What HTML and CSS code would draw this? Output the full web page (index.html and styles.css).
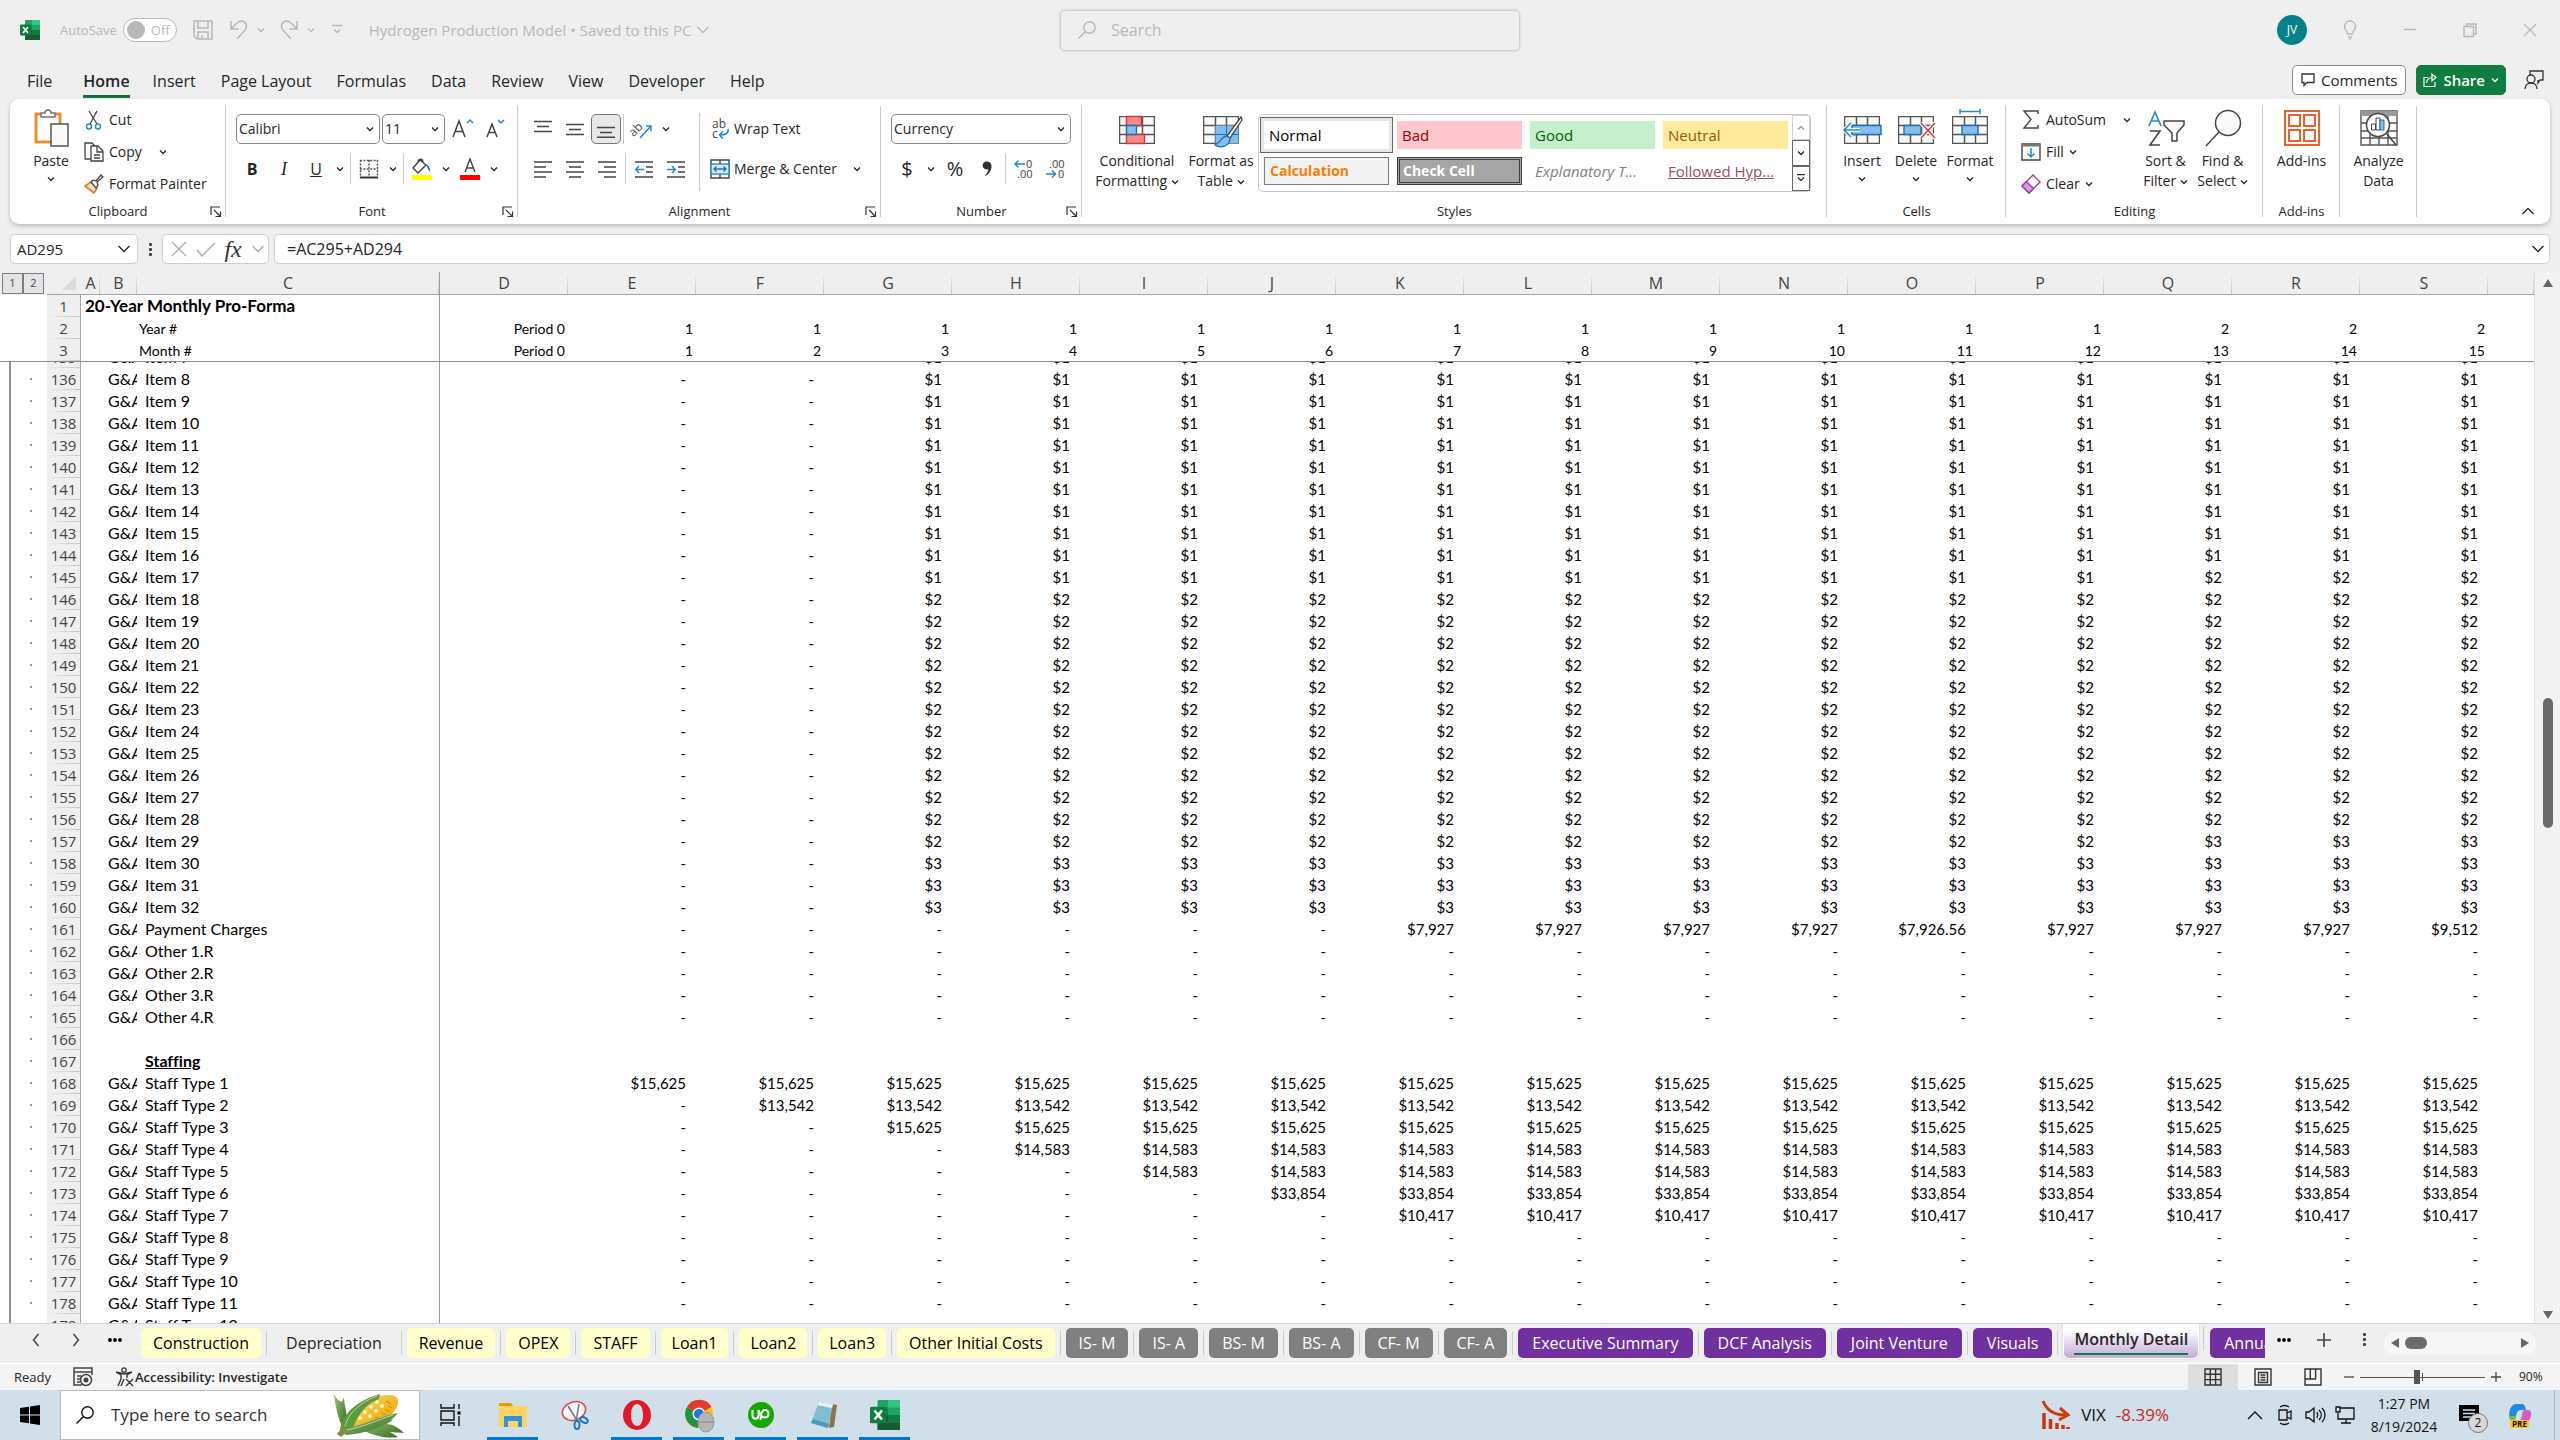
FILE: index.html
```
<!DOCTYPE html>
<html lang="en">
<head>
<meta charset="utf-8">
<title>Hydrogen Production Model - Excel</title>
<link rel="stylesheet" href="styles.css">
</head>
<body>
<svg class="defs" aria-hidden="true">
  <symbol id="chev" viewBox="0 0 8 8"><path d="M1 2.5l3 3 3-3" fill="none" stroke="currentColor" stroke-width="1.3"/></symbol>
  <symbol id="chev-lg" viewBox="0 0 14 14"><path d="M1.5 4l5.500 5.500L12.500 4" fill="none" stroke="currentColor" stroke-width="1.3"/></symbol>
  <symbol id="launch" viewBox="0 0 12 12"><path d="M1 9V1h9M4 4l6 6M10.500 5.500v5h-5" fill="none" stroke="#333" stroke-width="1.2"/></symbol>
  <symbol id="excel" viewBox="0 0 20 20">
    <rect x="5" y="0" width="15" height="20" rx="1" fill="#21a366"/><rect x="12" y="0" width="8" height="5" fill="#33c481"/><rect x="5" y="5" width="7" height="5" fill="#17864c"/><rect x="12" y="10" width="8" height="5" fill="#107c41"/><rect x="5" y="10" width="7" height="5" fill="#185c37"/><rect x="5" y="15" width="15" height="5" fill="#185c37"/><rect x="0" y="4.500" width="11" height="11" rx="1" fill="#107c41"/><path d="M3 7l5 6M8 7l-5 6" stroke="#fff" stroke-width="1.700"/>
  </symbol>
  <symbol id="mag" viewBox="0 0 20 20"><circle cx="12.500" cy="7.500" r="5.700" fill="none" stroke="currentColor" stroke-width="1.400"/><path d="M8.500 11.500L1.500 18.500" stroke="currentColor" stroke-width="1.400"/></symbol>
  <symbol id="grid-cells" viewBox="0 0 36 28"><path d="M.5.5h35v27H.5zM12.500.5v27M23.500.5v27M.5 9.500h35M.5 18.500h35" fill="#fafafa" stroke="#555" stroke-width="1.500"/></symbol>
</svg>

<header class="titlebar">
  <div class="title-left">
    <svg class="i20"><use href="#excel"/></svg>
    <label class="autosave"><span>AutoSave</span><input type="checkbox" class="toggle-input"><span class="toggle"><i></i>Off</span></label>
    <div class="quick">
      <button class="ib" aria-label="Save"><svg class="i20" viewBox="0 0 20 20"><path d="M1 1h18v18H4l-3-3zM5 1v7h10V1M5 19v-7h10v7M9 19v-4" fill="none" stroke="currentColor" stroke-width="1.500"/></svg></button>
      <button class="ib pair" aria-label="Undo"><svg class="i20" viewBox="0 0 20 20"><path d="M2 1v8h8M2 9l6-6c6-5 12 1 8 7l-8 9" fill="none" stroke="currentColor" stroke-width="1.500"/></svg><svg class="i8"><use href="#chev"/></svg></button>
      <button class="ib pair" aria-label="Redo"><svg class="i20" viewBox="0 0 20 20"><path d="M18 1v8h-8M18 9l-6-6C6-2 0 4 4 10l8 9" fill="none" stroke="currentColor" stroke-width="1.500"/></svg><svg class="i8"><use href="#chev"/></svg></button>
      <button class="ib" aria-label="Customize Quick Access Toolbar"><svg class="i12" viewBox="0 0 12 12"><path d="M1 1.500h10M3 5.500l3 3 3-3" fill="none" stroke="currentColor" stroke-width="1.300"/></svg></button>
    </div>
    <button class="doc">Hydrogen Production Model • Saved to this PC <svg class="i14"><use href="#chev-lg"/></svg></button>
  </div>
  <label class="search"><svg class="i20"><use href="#mag"/></svg><input type="text" placeholder="Search" aria-label="Search"></label>
  <div class="title-right">
    <button class="avatar">JV</button>
    <button class="wb" aria-label="Tips"><svg class="i20" viewBox="0 0 20 20"><path d="M7.500 14c0-3-3-4-3-7.500a5.500 5.500 0 0 1 11 0c0 3.500-3 4.500-3 7.500zM8 17h4M9 19h2" fill="none" stroke="currentColor" stroke-width="1.300"/></svg></button>
    <button class="wb" aria-label="Minimize"><svg class="i14" viewBox="0 0 14 14"><path d="M1 6.500h12" stroke="currentColor" stroke-width="1.500"/></svg></button>
    <button class="wb" aria-label="Restore"><svg class="i14" viewBox="0 0 14 14"><path d="M1 3.500h9.500v10H1zM3.500 3V1h9.500v10h-2" fill="none" stroke="currentColor" stroke-width="1.400"/></svg></button>
    <button class="wb" aria-label="Close"><svg class="i14" viewBox="0 0 14 14"><path d="M1 1l12 12M13 1L1 13" stroke="currentColor" stroke-width="1.300"/></svg></button>
  </div>
</header>

<nav class="menu">
  <button class="first">File</button><button class="on">Home</button><button>Insert</button><button>Page Layout</button><button>Formulas</button><button>Data</button><button>Review</button><button>View</button><button>Developer</button><button>Help</button>
  <div class="menu-right">
    <button class="comments"><svg class="i14" viewBox="0 0 14 14"><path d="M1 1h12v8.500H6L3 12.500v-3H1z" fill="none" stroke="#333" stroke-width="1.300"/></svg>Comments</button>
    <button class="share"><svg class="i14" viewBox="0 0 14 14"><path d="M5 4.500H1v9h11V9M3.500 10c.5-4 3-5.500 6-5.500M9 1v7l4-3.500z" fill="none" stroke="#fff" stroke-width="1.200"/></svg>Share<svg class="i8"><use href="#chev"/></svg></button>
    <button class="ib" aria-label="Presence"><svg class="i20" viewBox="0 0 20 20"><path d="M6 5V1h13v9h-3l-2 3v-3" fill="none" stroke="#333" stroke-width="1.300"/><circle cx="7" cy="9" r="4" fill="none" stroke="#333" stroke-width="1.300"/><path d="M1 19c0-8 12-8 12 0" fill="none" stroke="#333" stroke-width="1.300"/></svg></button>
  </div>
</nav>

<section class="ribbon">
  <div class="group g-clip">
    <div class="gbody">
      <button class="big"><svg class="i38" viewBox="0 0 38 38"><path d="M4 5h24v28H4z" fill="#fff" stroke="#e8912d" stroke-width="3"/><path d="M9 8V4h4c0-4 6-4 6 0h4v4z" fill="#fff" stroke="#777" stroke-width="1.500"/><path d="M19 15h17v22H19z" fill="#fafafa" stroke="#555" stroke-width="1.500"/></svg><span>Paste</span><svg class="i8"><use href="#chev"/></svg></button>
      <div class="rows3">
        <button class="sm"><svg class="i20" viewBox="0 0 20 20"><path d="M5 1l8 13M13 1L6 14" stroke="#444" stroke-width="1.300"/><circle cx="5" cy="16.500" r="2.500" fill="none" stroke="#1e8bcd" stroke-width="1.400"/><circle cx="14" cy="16.500" r="2.500" fill="none" stroke="#1e8bcd" stroke-width="1.400"/></svg>Cut</button>
        <button class="sm"><svg class="i20" viewBox="0 0 20 20"><path d="M7 17H1V1h7l3 3M7 4h7l5 5v10H7zM13 4v6h6M10 13h6M10 16h6" fill="none" stroke="#444" stroke-width="1.300"/></svg>Copy<svg class="i8 far"><use href="#chev"/></svg></button>
        <button class="sm"><svg class="i20" viewBox="0 0 20 20"><path d="M1 12l6-4 6 6-3 5z" fill="#fbe3c9" stroke="#e07b1a" stroke-width="1.600"/><path d="M7 8l2-2 3 1 5-6 2 2-6 5 1 3-2 3z" fill="#fff" stroke="#444" stroke-width="1.300"/></svg>Format Painter</button>
      </div>
    </div>
    <div class="glabel"><span>Clipboard</span><button class="launch" aria-label="Clipboard settings"><svg class="i12"><use href="#launch"/></svg></button></div>
  </div>

  <div class="group g-font">
    <div class="gbody rows2">
      <div class="row">
        <span class="sel w-font"><select aria-label="Font"><option>Calibri</option></select><svg class="i8"><use href="#chev"/></svg></span>
        <span class="sel w-size"><select aria-label="Font size"><option>11</option></select><svg class="i8"><use href="#chev"/></svg></span>
        <button class="ic" aria-label="Increase font size"><svg class="i24" viewBox="0 0 24 24"><path d="M2 20L8 4l6 16M4 14.500h8" fill="none" stroke="#444" stroke-width="1.500"/><path d="M16 6l3-3 3 3" fill="none" stroke="#1e8bcd" stroke-width="1.500"/></svg></button>
        <button class="ic" aria-label="Decrease font size"><svg class="i24" viewBox="0 0 24 24"><path d="M4 20L9 7l5 13M6 15.500h6" fill="none" stroke="#444" stroke-width="1.500"/><path d="M15 3l3 3 3-3" fill="none" stroke="#1e8bcd" stroke-width="1.500"/></svg></button>
      </div>
      <div class="row">
        <button class="ic glyph"><b>B</b></button><button class="ic glyph"><i class="serif">I</i></button><button class="ic glyph"><u>U</u></button><button class="dd" aria-label="Underline options"><svg class="i8"><use href="#chev"/></svg></button>
        <hr>
        <button class="ic" aria-label="Borders"><svg class="i20" viewBox="0 0 20 20"><path d="M1.500 1v18M10 1v18M18.500 1v18M1 1.500h18M1 10h18" stroke="#555" stroke-width="1.500" stroke-dasharray="2 1.400"/><path d="M1 18.500h18" stroke="#333" stroke-width="2"/></svg></button><button class="dd" aria-label="Border options"><svg class="i8"><use href="#chev"/></svg></button>
        <hr>
        <button class="ic" aria-label="Fill color"><svg class="i22" viewBox="0 0 22 22"><path d="M9 2l-7 8 5 5 8-8zM7 5c0-5 5-5 5 0" fill="none" stroke="#444" stroke-width="1.400"/><path d="M15 6c4 2 4 5 4 8l-2-3z" fill="#1e6fb5"/><rect x="1" y="17" width="20" height="5" fill="#ff0"/></svg></button><button class="dd" aria-label="Fill options"><svg class="i8"><use href="#chev"/></svg></button>
        <button class="ic" aria-label="Font color"><svg class="i22" viewBox="0 0 22 22"><path d="M6 14L11 1l5 13M8 10h6" fill="none" stroke="#444" stroke-width="1.400"/><rect x="1" y="17" width="20" height="5" fill="#f00"/></svg></button><button class="dd" aria-label="Font color options"><svg class="i8"><use href="#chev"/></svg></button>
      </div>
    </div>
    <div class="glabel"><span>Font</span><button class="launch" aria-label="Font settings"><svg class="i12"><use href="#launch"/></svg></button></div>
  </div>

  <div class="group g-align">
    <div class="gbody">
      <div class="rows2 al-left">
        <div class="row">
          <button class="ic" aria-label="Top align"><svg class="i18" viewBox="0 0 18 18"><path d="M0 1.500h18M3 6.500h12M0 11.500h18" stroke="#444" stroke-width="1.400"/></svg></button>
          <button class="ic" aria-label="Middle align"><svg class="i18" viewBox="0 0 18 18"><path d="M0 4.500h18M3 9.500h12M0 14.500h18" stroke="#444" stroke-width="1.400"/></svg></button>
          <button class="ic pressed" aria-label="Bottom align"><svg class="i18" viewBox="0 0 18 18"><path d="M0 7.500h18M3 12.500h12M0 17.300h18" stroke="#444" stroke-width="1.400"/></svg></button>
          <hr>
          <button class="ic" aria-label="Orientation"><svg class="i22" viewBox="0 0 22 22"><text x="-3" y="14" font-size="12" fill="#444" transform="rotate(-45 6 10)">ab</text><path d="M9 20L20 8M15 8h5v5" fill="none" stroke="#1e8bcd" stroke-width="1.500"/></svg></button><button class="dd" aria-label="Orientation options"><svg class="i8"><use href="#chev"/></svg></button>
        </div>
        <div class="row">
          <button class="ic" aria-label="Align left"><svg class="i18" viewBox="0 0 18 18"><path d="M0 2h18M0 7h12M0 12h18M0 17h12" stroke="#444" stroke-width="1.400"/></svg></button>
          <button class="ic" aria-label="Center"><svg class="i18" viewBox="0 0 18 18"><path d="M0 2h18M3 7h12M0 12h18M3 17h12" stroke="#444" stroke-width="1.400"/></svg></button>
          <button class="ic" aria-label="Align right"><svg class="i18" viewBox="0 0 18 18"><path d="M0 2h18M6 7h12M0 12h18M6 17h12" stroke="#444" stroke-width="1.400"/></svg></button>
          <hr>
          <button class="ic" aria-label="Decrease indent"><svg class="i18" viewBox="0 0 18 18"><path d="M0 2h18M11 7h7M11 12h7M0 17h18" stroke="#444" stroke-width="1.400"/><path d="M9 9.500H1M4 6L.8 9.500 4 13" fill="none" stroke="#1e8bcd" stroke-width="1.500"/></svg></button>
          <button class="ic" aria-label="Increase indent"><svg class="i18" viewBox="0 0 18 18"><path d="M0 2h18M11 7h7M11 12h7M0 17h18" stroke="#444" stroke-width="1.400"/><path d="M0 9.500h8M5 6l3.200 3.500L5 13" fill="none" stroke="#1e8bcd" stroke-width="1.500"/></svg></button>
        </div>
      </div>
      <hr class="tall">
      <div class="rows2 al-right">
        <button class="row sm"><svg class="i20" viewBox="0 0 20 20"><text x="2" y="9" font-size="12" fill="#444">ab</text><text x="2" y="19" font-size="12" fill="#444">c</text><path d="M18 10c1 4-2 6-8 6M13 12.500L9.500 16l3.500 3.500" fill="none" stroke="#1e8bcd" stroke-width="1.600"/></svg>Wrap Text</button>
        <button class="row sm"><svg class="i20" viewBox="0 0 20 20"><path d="M1 1h18v18H1zM10 1v4M10 15v4" fill="none" stroke="#444" stroke-width="1.400"/><rect x="1" y="5" width="18" height="10" fill="#d6ebfa" stroke="#1e8bcd" stroke-width="1.400"/><path d="M4 10h12M6.500 7.500L4 10l2.500 2.500M13.500 7.500L16 10l-2.500 2.500" fill="none" stroke="#1e6fb5" stroke-width="1.400"/></svg>Merge &amp; Center<svg class="i8 far"><use href="#chev"/></svg></button>
      </div>
    </div>
    <div class="glabel"><span>Alignment</span><button class="launch" aria-label="Alignment settings"><svg class="i12"><use href="#launch"/></svg></button></div>
  </div>

  <div class="group g-num">
    <div class="gbody rows2">
      <div class="row"><span class="sel w-num"><select aria-label="Number format"><option>Currency</option></select><svg class="i8"><use href="#chev"/></svg></span></div>
      <div class="row shift">
        <button class="ic glyph lg">$</button><button class="dd" aria-label="Currency options"><svg class="i8"><use href="#chev"/></svg></button><button class="ic glyph lg">%</button><button class="ic" aria-label="Comma style"><svg class="i18" viewBox="0 0 18 18"><path d="M9 1.500a4 4 0 1 0 1.500 7.500c-.5 3-2 5-4 7 4-1 7-5 7-10 0-3-2-4.500-4.500-4.500z" fill="#333"/></svg></button>
        <hr>
        <button class="ic" aria-label="Increase decimal"><svg class="i20" viewBox="0 0 20 20"><text x="12" y="9" font-size="11" fill="#444">0</text><text x="3" y="19" font-size="11" fill="#444">.00</text><path d="M11 5H1M4.500 1.500L1 5l3.500 3.500" fill="none" stroke="#1e8bcd" stroke-width="1.500"/></svg></button>
        <button class="ic" aria-label="Decrease decimal"><svg class="i20" viewBox="0 0 20 20"><text x="3" y="9" font-size="11" fill="#444">.00</text><text x="12" y="19" font-size="11" fill="#444">0</text><path d="M0 15h9M6 11.500L9.500 15 6 18.500" fill="none" stroke="#1e8bcd" stroke-width="1.500"/></svg></button>
      </div>
    </div>
    <div class="glabel"><span>Number</span><button class="launch" aria-label="Number settings"><svg class="i12"><use href="#launch"/></svg></button></div>
  </div>

  <div class="group g-styles">
    <div class="gbody">
      <button class="big wide"><svg class="i38" viewBox="0 0 38 38"><g transform="translate(1 7)"><use href="#grid-cells" width="36" height="28"/><path d="M7.500.5h15v9h-15zM7.500 18.500h18v9h-18z" fill="#ff8a8a" stroke="#d13438" stroke-width="1.400"/><path d="M7.500 9.500h10v9h-10z" fill="#83beec" stroke="#1e6fb5" stroke-width="1.400"/></g></svg><span>Conditional<br>Formatting <svg class="i8"><use href="#chev"/></svg></span></button>
      <button class="big mid"><svg class="i38" viewBox="0 0 38 38"><g transform="translate(1 7)"><use href="#grid-cells" width="36" height="28"/><path d="M12.500 9.500h23v18h-23z" fill="#83beec"/><path d="M12.500 18.500h23M23.500 9.500v18" stroke="#1e6fb5"/><path d="M38 1L24 20l3 2L39 4z" fill="#fff" stroke="#444" stroke-width="1.300"/><path d="M24 20c-6 0-5 6-12 9 6 4 15 1 15-7z" fill="#83beec" stroke="#1e6fb5" stroke-width="1.300"/></g></svg><span>Format as<br>Table <svg class="i8"><use href="#chev"/></svg></span></button>
      <div class="gallery">
        <div class="swatches">
          <button class="sw normal">Normal</button><button class="sw bad">Bad</button><button class="sw good">Good</button><button class="sw neutral">Neutral</button>
          <button class="sw calc">Calculation</button><button class="sw check">Check Cell</button><button class="sw expl">Explanatory T...</button><button class="sw link">Followed Hyp...</button>
        </div>
        <div class="gscroll">
          <button class="dim" aria-label="Previous styles"><svg class="i8 flip"><use href="#chev"/></svg></button>
          <button aria-label="Next styles"><svg class="i8"><use href="#chev"/></svg></button>
          <button aria-label="More styles"><svg class="i8" viewBox="0 0 8 8"><path d="M0 .7h8M1 3.500l3 3 3-3" fill="none" stroke="#333" stroke-width="1.300"/></svg></button>
        </div>
      </div>
    </div>
    <div class="glabel"><span>Styles</span></div>
  </div>

  <div class="group g-cells">
    <div class="gbody">
      <button class="big"><svg class="i38" viewBox="0 0 38 38"><g transform="translate(1 7)"><use href="#grid-cells" width="36" height="28"/><path d="M8 9.500h29v9H8z" fill="#83beec" stroke="#1e6fb5" stroke-width="1.400"/><path d="M0 14h16M7 7l-7 7 7 7" fill="none" stroke="#fff" stroke-width="4"/><path d="M0 14h16M7 7l-7 7 7 7" fill="none" stroke="#1e8bcd" stroke-width="1.600"/></g></svg><span>Insert</span><svg class="i8"><use href="#chev"/></svg></button>
      <button class="big"><svg class="i38" viewBox="0 0 38 38"><g transform="translate(1 7)"><use href="#grid-cells" width="36" height="28"/><path d="M6 9.500h17v9H6z" fill="#83beec" stroke="#1e6fb5" stroke-width="1.400"/><path d="M23 7l14 15M37 7L23 22" stroke="#fff" stroke-width="4"/><path d="M23 7l14 15M37 7L23 22" stroke="#e03a3e" stroke-width="1.600"/></g></svg><span>Delete</span><svg class="i8"><use href="#chev"/></svg></button>
      <button class="big"><svg class="i38" viewBox="0 0 38 38"><path d="M9 2.500h20M9 0v5M29 0v5" stroke="#1e8bcd" stroke-width="1.500"/><g transform="translate(1 7)"><use href="#grid-cells" width="36" height="28"/><path d="M10 9.500h16v9H10z" fill="#83beec" stroke="#1e6fb5" stroke-width="1.400"/></g></svg><span>Format</span><svg class="i8"><use href="#chev"/></svg></button>
    </div>
    <div class="glabel"><span>Cells</span></div>
  </div>

  <div class="group g-edit">
    <div class="gbody">
      <div class="rows3">
        <button class="sm"><svg class="i20" viewBox="0 0 20 20"><path d="M17 4V1H3l7 8.500L3 18h14v-3" fill="none" stroke="#444" stroke-width="1.400"/></svg>AutoSum<svg class="i8 far"><use href="#chev"/></svg></button>
        <button class="sm"><svg class="i20" viewBox="0 0 20 20"><path d="M1 2h18v16H1z" fill="#fff" stroke="#444" stroke-width="1.400"/><path d="M1 3h18" stroke="#777" stroke-width="3"/><path d="M10 6v9M6.500 11.500L10 15l3.500-3.500" fill="none" stroke="#1e8bcd" stroke-width="1.500"/></svg>Fill<svg class="i8"><use href="#chev"/></svg></button>
        <button class="sm"><svg class="i20" viewBox="0 0 20 20"><path d="M1 12L12 1l7 7L8 19z" fill="#fff" stroke="#9b3fa5" stroke-width="1.400"/><path d="M1 12l4.500-4.500 7 7L8 19z" fill="#d79ade" stroke="#9b3fa5" stroke-width="1.400"/></svg>Clear<svg class="i8"><use href="#chev"/></svg></button>
      </div>
      <button class="big"><svg class="i38" viewBox="0 0 38 38"><path d="M2 17L8 3l6 14M4 12h8" fill="none" stroke="#1e8bcd" stroke-width="1.600"/><path d="M3 22h10L3 36h10" fill="none" stroke="#444" stroke-width="1.600"/><path d="M17 12h20v4l-7 8v8h-5v-8l-8-8z" fill="#fafafa" stroke="#444" stroke-width="1.500"/></svg><span>Sort &amp;<br>Filter <svg class="i8"><use href="#chev"/></svg></span></button>
      <button class="big"><svg class="i38" viewBox="0 0 38 38"><circle cx="24" cy="14" r="12.500" fill="#fafafa" stroke="#444" stroke-width="1.500"/><path d="M15 23L2 37" stroke="#444" stroke-width="1.500"/></svg><span>Find &amp;<br>Select <svg class="i8"><use href="#chev"/></svg></span></button>
    </div>
    <div class="glabel"><span>Editing</span></div>
  </div>

  <div class="group g-add">
    <div class="gbody"><button class="big"><svg class="i38" viewBox="0 0 38 38"><path d="M2 2h34v34H2zM6 6h11v11H6zM21 6h11v11H21zM6 21h11v11H6zM21 21h11v11H21z" fill="#fff" stroke="#e8622c" stroke-width="2"/></svg><span>Add-ins</span></button></div>
    <div class="glabel"><span>Add-ins</span></div>
  </div>
  <div class="group g-add">
    <div class="gbody"><button class="big"><svg class="i38" viewBox="0 0 38 38"><path d="M1 2h36v34H1zM1 14h36M1 22h36M1 29h36M10 6v30M28 6v30M19 6v30" fill="#fafafa" stroke="#555" stroke-width="1.400"/><path d="M1 4.500h36" stroke="#999" stroke-width="5"/><circle cx="18" cy="16" r="11.500" fill="#fff" stroke="#444" stroke-width="1.500"/><path d="M27 25l9 11" stroke="#444" stroke-width="1.500"/><path d="M11.500 15h4v6h-4zM16 9h4v12h-4z" fill="#fff" stroke="#444"/><path d="M20 11h4v10h-4z" fill="#83beec" stroke="#1e6fb5"/></svg><span>Analyze<br>Data</span></button></div>
    <div class="glabel"></div>
  </div>
  <button class="ib collapse" aria-label="Collapse ribbon"><svg class="i14 flip"><use href="#chev-lg"/></svg></button>
</section>

<section class="formula">
  <label class="fbox namebox"><input type="text" value="AD295" aria-label="Name box"><svg class="i14"><use href="#chev-lg"/></svg></label>
  <span class="grip" aria-hidden="true"><i></i><i></i><i></i></span>
  <div class="fbox fx">
    <button class="ib" aria-label="Cancel"><svg class="i18" viewBox="0 0 18 18"><path d="M2 2l14 14M16 2L2 16" stroke="#aaa" stroke-width="1.300"/></svg></button>
    <button class="ib" aria-label="Enter"><svg class="i18" viewBox="0 0 18 18"><path d="M0 10l5 6L18 3" fill="none" stroke="#aaa" stroke-width="1.300"/></svg></button>
    <button class="ib fn">fx</button>
    <button class="ib" aria-label="Function list"><svg class="i14 grey"><use href="#chev-lg"/></svg></button>
  </div>
  <label class="fbox finput"><input type="text" value="=AC295+AD294" aria-label="Formula bar"><svg class="i14"><use href="#chev-lg"/></svg></label>
</section>

<main class="sheet">
  <div class="panes">
    <table class="grid frozen" id="frozen"></table>
    <div class="scroll" id="scroll"><table class="grid" id="body"></table></div>
  </div>
  <div class="vbar" aria-hidden="true"><svg class="i12" viewBox="0 0 12 12"><path d="M6 2l5 8H1z" fill="#666"/></svg><i class="above"></i><i class="thumb"></i><i class="below"></i><svg class="i12 flip" viewBox="0 0 12 12"><path d="M6 2l5 8H1z" fill="#666"/></svg></div>
</main>

<footer class="tabs">
  <div class="tabnav">
    <button class="ib" aria-label="Previous sheet"><svg class="i14" viewBox="0 0 14 14"><path d="M9.500 1l-5 6 5 6" fill="none" stroke="#444" stroke-width="1.500"/></svg></button>
    <button class="ib" aria-label="Next sheet"><svg class="i14" viewBox="0 0 14 14"><path d="M4.500 1l5 6-5 6" fill="none" stroke="#444" stroke-width="1.500"/></svg></button>
    <button class="ib" aria-label="More sheets"><svg class="i14" viewBox="0 0 14 14"><circle cx="2" cy="7" r="1.900"/><circle cx="7" cy="7" r="1.900"/><circle cx="12" cy="7" r="1.900"/></svg></button>
  </div>
  <div class="tablist">
    <button class="tab y">Construction</button><button class="tab plain">Depreciation</button><button class="tab y">Revenue</button><button class="tab y">OPEX</button><button class="tab y">STAFF</button><button class="tab y loan">Loan1</button><button class="tab y loan">Loan2</button><button class="tab y loan">Loan3</button><button class="tab y">Other Initial Costs</button><button class="tab g">IS- M</button><button class="tab g">IS- A</button><button class="tab g">BS- M</button><button class="tab g">BS- A</button><button class="tab g">CF- M</button><button class="tab g">CF- A</button><button class="tab p">Executive Summary</button><button class="tab p">DCF Analysis</button><button class="tab p">Joint Venture</button><button class="tab p">Visuals</button><button class="tab active"><span>Monthly Detail</span></button><button class="tab p">Annual Detail</button>
  </div>
  <div class="tabend">
    <button class="ib" aria-label="More sheets"><svg class="i14" viewBox="0 0 14 14"><circle cx="2" cy="7" r="1.900"/><circle cx="7" cy="7" r="1.900"/><circle cx="12" cy="7" r="1.900"/></svg></button>
    <button class="ib" aria-label="New sheet"><svg class="i14" viewBox="0 0 14 14"><path d="M7 0v14M0 7h14" stroke="#444" stroke-width="1.700"/></svg></button>
    <span class="grip" aria-hidden="true"><i></i><i></i><i></i></span>
  </div>
  <div class="hbar" aria-hidden="true"><svg class="i12" viewBox="0 0 12 12"><path d="M2 6l8-5v10z" fill="#666"/></svg><i></i><svg class="i12 last" viewBox="0 0 12 12"><path d="M10 6L2 1v10z" fill="#666"/></svg></div>
</footer>

<div class="status">
  <span>Ready</span>
  <svg class="i20" viewBox="0 0 20 20"><path d="M19 8V1H1v17h8M1 5h18M4 9h4M4 12h3M4 15h3" fill="none" stroke="#444" stroke-width="1.500"/><circle cx="13" cy="13" r="5.500" fill="#f4f4f4" stroke="#444" stroke-width="1.500"/><circle cx="13" cy="13" r="2.500" fill="#444"/></svg>
  <button class="acc"><svg class="i20" viewBox="0 0 20 20"><circle cx="9" cy="3" r="2.200" fill="none" stroke="#333" stroke-width="1.300"/><path d="M1 5l5 3v4l-3 7M17 5l-5 3v3M9 12l-3 7M1 5l8 2 8-2M11 12l7 7M18 12l-7 7" fill="none" stroke="#333" stroke-width="1.400"/></svg>Accessibility: Investigate</button>
  <div class="views">
    <button class="view on" aria-label="Normal view"><svg class="i18" viewBox="0 0 18 18"><path d="M1 1h16v16H1zM6.300 1v16M11.600 1v16M1 6.300h16M1 11.600h16" fill="none" stroke="#333" stroke-width="1.400"/></svg></button>
    <button class="view" aria-label="Page layout view"><svg class="i18" viewBox="0 0 18 18"><path d="M1 1h16v16H1zM4.500 4.500h9v10h-9zM6.500 7h5M6.500 9.500h5M6.500 12h5" fill="none" stroke="#333" stroke-width="1.400"/></svg></button>
    <button class="view" aria-label="Page break view"><svg class="i18" viewBox="0 0 18 18"><path d="M1 1h16v16H1zM6.300 1v10M11.600 1v10M1 11h11" fill="none" stroke="#333" stroke-width="1.400"/></svg></button>
  </div>
  <div class="zoom"><button class="ib" aria-label="Zoom out"><svg class="i12" viewBox="0 0 12 12"><path d="M1 6h10" stroke="#444" stroke-width="1.300"/></svg></button><input type="range" min="0" max="100" value="45" aria-label="Zoom"><button class="ib" aria-label="Zoom in"><svg class="i12" viewBox="0 0 12 12"><path d="M1 6h10M6 1v10" stroke="#444" stroke-width="1.300"/></svg></button><button class="pct">90%</button></div>
</div>

<div class="taskbar">
  <button class="start" aria-label="Start"><svg class="i20" viewBox="0 0 20 20"><path d="M0 3l9-1.300V9.500H0zM10 1.500L20 0v9.500H10zM0 10.500h9v7.800L0 17zM10 10.500h10V20l-10-1.500z"/></svg></button>
  <label class="tsearch"><svg class="i20"><use href="#mag"/></svg><input type="text" placeholder="Type here to search" aria-label="Type here to search">
    <svg class="corn" viewBox="0 0 72 46"><defs><linearGradient id="lf" x1="0" y1="0" x2="1" y2="1"><stop offset="0" stop-color="#9cc27a"/><stop offset="1" stop-color="#2f6b1f"/></linearGradient><linearGradient id="kn" x1="0" y1="0" x2="1" y2="1"><stop offset="0" stop-color="#ffe066"/><stop offset="1" stop-color="#e89a00"/></linearGradient></defs>
      <path d="M1 1c2 6 5 8 8 9l2-5c0 8 3 14 3 24l-4 8C5 26 2 14 1 1z" fill="url(#lf)"/><path d="M36 34c8-6 16-8 24-6l-6 4c6 0 12 4 17 9l-14-1 8 5c-14 2-24-2-34-6z" fill="url(#lf)"/><path d="M18 36C18 18 34 3 56 3c10 0 11 7 7 13-6 14-22 22-45 20z" fill="url(#kn)"/><g fill="#fff3b8"><circle cx="44" cy="10" r="2"/><circle cx="49" cy="14" r="2"/><circle cx="38" cy="15" r="2"/><circle cx="43" cy="19" r="2"/><circle cx="32" cy="20" r="2"/><circle cx="37" cy="24" r="2"/><circle cx="27" cy="26" r="2"/></g><path d="M53 9l5 3M55 14l4 2M48 20l5 3M42 25l5 2M52 17l4 3" stroke="#d98f00" stroke-width="1.200"/><path d="M7 38C10 20 26 8 47 2l-1 5C32 12 24 24 20 37z" fill="#5c9a3e"/><path d="M7 38c16-2 34-12 58-17-10 12-24 19-52 22z" fill="url(#lf)"/><path d="M4 42l6-8 5 5-7 6z" fill="#8a8a3c"/><path d="M12 34C16 20 28 10 44 4M14 38c16-3 30-10 46-15" stroke="#b9d79c" fill="none"/></svg>
  </label>
  <div class="apps">
    <button class="app" aria-label="Task view"><svg class="i22" viewBox="0 0 22 22"><path d="M1 0v4h13V0M1 7h13v9H1zM1 22v-3h13v3M19 0v5M19 12v10" fill="none" stroke="#111" stroke-width="1.400"/><path d="M17.500 7.500h3v3h-3z"/></svg></button>
    <button class="app run" aria-label="File Explorer"><svg class="i30" viewBox="0 0 30 30"><path d="M1 3h12l3 4H1z" fill="#e0a100"/><path d="M1 6h28v21H1z" fill="#ffd35c"/><path d="M6 16h18v11h-4v-6h-10v6H6z" fill="#2f95dc"/></svg></button>
    <button class="app" aria-label="Snip"><svg class="i30" viewBox="0 0 30 30"><ellipse cx="14" cy="11" rx="12" ry="9" fill="#f4f6f8" stroke="#e04848" stroke-width="1.500" transform="rotate(-20 14 11)"/><path d="M8 6l10 16M19 4l-3 18" stroke="#777" stroke-width="1.500"/><ellipse cx="17" cy="25" rx="2.500" ry="4" fill="none" stroke="#1879c9" stroke-width="2"/><ellipse cx="24" cy="20" rx="4" ry="2.500" fill="none" stroke="#1879c9" stroke-width="2" transform="rotate(30 24 20)"/></svg></button>
    <button class="app run" aria-label="Opera"><svg class="i30" viewBox="0 0 30 30"><path d="M15 0a14 15 0 1 0 0 30 14 15 0 0 0 0-30zm0 4c4 0 6 5 6 11s-2 11-6 11-6-5-6-11 2-11 6-11z" fill="#e2182a" fill-rule="evenodd"/></svg></button>
    <button class="app run" aria-label="Chrome"><svg class="i30" viewBox="0 0 30 30"><circle cx="15" cy="14" r="14" fill="#fbc116"/><path d="M15 14L3 7a14 14 0 0 1 24.500 0z" fill="#e33b2e"/><path d="M15 14L3 7a14 14 0 0 0 11 21z" fill="#229342"/><circle cx="15" cy="14" r="6.500" fill="#fff"/><circle cx="15" cy="14" r="5" fill="#1a73e8"/><ellipse cx="22" cy="22" rx="8" ry="10" fill="#b4b4b4" stroke="#999"/><path d="M14 22h16" stroke="#888"/></svg></button>
    <button class="app run" aria-label="Upwork"><svg class="i30" viewBox="0 0 30 30"><circle cx="15" cy="15" r="13" fill="#14a800"/><path d="M6.500 10v5c0 5 6 5 6 0v-5M12.500 10c2 5 3 7.500 6 7.500 2.500 0 4-1.500 4-3.700S21 10 18.500 10s-3.500 3-4 10" fill="none" stroke="#fff" stroke-width="2"/></svg></button>
    <button class="app run" aria-label="Notepad"><svg class="i30" viewBox="0 0 30 30"><path d="M24 4l5 1-3 22-5 1z" fill="#8a7448"/><path d="M11 2l14 2-5 24L3 23z" fill="#7fbfd2"/><path d="M11 2l14 2-1 4-15-3z" fill="#e6f2f6"/><path d="M3 23l17 5 1-4-16-5z" fill="#4b9bb4"/></svg></button>
    <button class="app run" aria-label="Excel"><svg class="i30"><use href="#excel"/></svg></button>
  </div>
  <div class="tray">
    <button class="vix"><svg class="i30" viewBox="0 0 30 30"><path d="M2 1c4 10 12 14 22 14M19 8l8 7-9 5" fill="none" stroke="#d23a0a" stroke-width="3"/><path d="M3 29V13M9.500 29V19M16 29v-6M22 29v-4M27 29v-2" stroke="#c8360c" stroke-width="3.500"/></svg><span>VIX</span><span class="neg">-8.39%</span></button>
    <div class="tricons">
      <svg class="i20" viewBox="0 0 20 20"><path d="M3 14l7-7 7 7" fill="none" stroke="#111" stroke-width="1.400"/></svg>
      <svg class="i20" viewBox="0 0 20 20"><path d="M4 5h8v10H4zM12 8l4-2v8l-4-2M5 2c3-2 6-2 9 0M5 18c3 2 6 2 9 0" fill="none" stroke="#111" stroke-width="1.300"/></svg>
      <svg class="i20" viewBox="0 0 20 20"><path d="M1 7h3l5-4v14l-5-4H1zM12 7c1 2 1 4 0 6M14 5c3 3 3 7 0 10M17 3c4 4 4 10 0 14" fill="none" stroke="#111" stroke-width="1.300"/></svg>
      <svg class="i20" viewBox="0 0 20 20"><path d="M5 3h14v11H3V8M11 14v4M6 18h10M1 2h4v5H1z" fill="none" stroke="#111" stroke-width="1.300"/></svg>
    </div>
    <button class="clock"><span>1:27 PM</span><span>8/19/2024</span></button>
    <button class="notif"><svg class="i20" viewBox="0 0 20 20"><path d="M0 0h20v16h-5l-4 4v-4H0z"/><path d="M4 5h12M4 8.500h12M4 12h12" stroke="#d1dfea" stroke-width="1.300"/></svg><span class="badge">2</span></button>
    <button class="cop" aria-label="Copilot"><svg class="i24" viewBox="0 0 24 24"><path d="M8 1h6c3 0 3 3 4 6h-5c-3 0-4 2-5 6l-1 3H4C-1 16 1 1 8 1z" fill="#1f8be8"/><path d="M16 7h4c6 0 3 13-4 13H9c3 0 4-3 5-8 .5-3 1-5 2-5z" fill="#d95bc8"/><path d="M1 11c0 6 1 7 6 7l1-5H2z" fill="#6cc04a"/></svg><b>PRE</b></button>
  </div>
</div>
<script src="app.js"></script>
</body>
</html>
```
FILE: styles.css
```
*{box-sizing:border-box}
html,body{height:100%}
body{margin:0;display:flex;flex-direction:column;background:#efefef;font:15px/20px "Open Sans","Noto Sans",sans-serif;color:#262626;overflow:hidden}
button,input,select{font:inherit;color:inherit;background:none;border:0;padding:0;margin:0;outline:0}
input{min-width:0}
svg{display:block;flex:none;overflow:visible}
i{font-style:normal}
.defs{position:absolute;width:0;height:0}
.i8{width:8px;height:8px}.i12{width:12px;height:12px}.i14{width:14px;height:14px}.i18{width:18px;height:18px}
.i20{width:20px;height:20px}.i22{width:22px;height:22px}.i24{width:24px;height:24px}.i30{width:30px;height:30px}.i38{width:38px;height:38px}
.flip{transform:rotate(180deg)}
.grey{color:#aaa}
.ib{display:flex;align-items:center;justify-content:center}

.titlebar{display:grid;grid-template-columns:1fr 460px 1fr;align-items:center;height:60px;flex:none;color:#b8b8b8;font-size:15px;padding-left:20px}
.title-left{display:flex;align-items:center;white-space:nowrap}
.autosave{display:flex;align-items:center;gap:6px;padding-left:20px;font-size:13px}
.toggle-input{position:absolute;opacity:0}
.toggle{display:flex;align-items:center;gap:6px;width:54px;height:24px;border:1px solid #b8b8b8;border-radius:12px;background:#fff;padding-left:3px}
.toggle i{width:18px;height:18px;border-radius:50%;background:#b8b8b8}
.quick{display:flex;gap:16px;padding-left:16px}
.pair{gap:8px}
.pair+.pair{margin-left:-2px}
.doc{display:flex;align-items:center;gap:5px;padding-left:26px}
.search{display:flex;align-items:center;gap:14px;height:41px;border:1px solid #cfcfcf;border-radius:5px;box-shadow:0 0 2px #bbb;padding:0 16px}
.search input{flex:1;font-size:16px}
input::placeholder{color:inherit;opacity:1}
.title-right{display:flex;justify-content:flex-end;align-items:center}
.avatar{width:30px;height:30px;border-radius:50%;background:#038387;color:#fff;font-size:12px;margin-right:13px}
.wb{width:60px;height:40px;display:flex;align-items:center;justify-content:center}

.menu{display:flex;align-items:flex-start;height:39px;flex:none;padding:5px 16px 0 27px;gap:25px;font-size:16px}
.menu>button{height:33px;line-height:32px;border-bottom:3px solid transparent}
.menu .first{margin-right:6px}
.menu .on{font-weight:600;border-color:#0f703b}
.menu .on+button{margin-left:-2px}
.menu-right{margin-left:auto;display:flex;gap:10px}
.comments,.share{display:flex;align-items:center;gap:6px;height:30px;border-radius:5px;border:1px solid #888;background:#fff;padding:0 8px}
.share{background:#107c41;border-color:#107c41;color:#fff;font-weight:600;font-size:15px;padding:0 6px}
.comments{font-size:15px}
.menu-right .ib{margin-left:8px}

.ribbon{display:flex;flex:none;margin:0 10px;background:#fff;border-radius:9px;padding-top:5px;box-shadow:0 2px 4px #bdbdbd}
.group{display:flex;flex-direction:column;flex:none;position:relative}
.group::after{content:"";position:absolute;right:0;top:2px;bottom:7px;width:1px;background:#c8c8c8}
.gbody{display:flex;height:96px}
.glabel{height:24px;display:flex;align-items:center;justify-content:center;font-size:13px;position:relative;padding-bottom:2px}
.launch{position:absolute;right:4px;top:6px}
.g-clip{width:216px}.g-font{width:292px}.g-align{width:363px}.g-num{width:201px}.g-styles{width:745px}.g-cells{width:179px}.g-edit{width:257px}.g-add{width:77px}
.rows3{display:flex;flex-direction:column}
.sm{display:flex;align-items:center;gap:5px;height:32px;font-size:14px;white-space:nowrap}
.sm .far{margin-left:12px}
.rows2{display:flex;flex-direction:column;padding-top:5px}
.row{display:flex;align-items:center;height:40px}
.big{display:flex;flex-direction:column;align-items:center;width:54px;padding-top:5px;font-size:14px;line-height:20px;white-space:nowrap}
.big span{padding-top:4px}
.big>.i8{margin-top:4px}
.big span .i8{display:inline-block}
.g-clip .big{width:60px;margin:0 3px 0 11px}
.wide{width:96px}.mid{width:72px}
.ic{width:32px;height:30px;display:flex;align-items:center;justify-content:center}
.glyph{font-size:16px}.lg{font-size:20px}
.serif{font-family:"Liberation Serif",serif;font-style:italic;font-size:18px}
.dd{width:16px;height:30px;display:flex;align-items:center;justify-content:center}
hr{width:1px;height:30px;border:0;background:#c8c8c8;margin:0 2px}
.tall{height:78px;margin-top:9px}
.pressed{width:30px;background:#e8e8ea;border:1px solid #777;border-radius:5px}
.sel{display:flex;align-items:center;height:30px;border:1px solid #888;border-radius:5px;padding:0 5px 0 2px;background:#fff}
.sel select{appearance:none;flex:1;min-width:0;font-size:14px}
.w-font{width:144px}.w-size{width:63px;margin:0 2px}.w-num{width:180px}
.g-font .gbody,.g-num .gbody{padding-left:10px}
.al-left{width:179px;padding-left:9px}
.al-right{padding-left:8px}
.al-right .sm{gap:4px}
.g-styles .gbody{padding-left:7px}
.gallery{display:flex;justify-content:space-between;width:553px;height:78px;margin:10px 0 0 1px;border:1px solid #c6c6c6;border-radius:5px}
.swatches{display:grid;grid-template-columns:repeat(4,125px);grid-template-rows:28px 28px;gap:8px;padding:6px 0 0 5px}
.sw{display:flex;align-items:center;padding:0 5px;white-space:nowrap;font-size:15px}
.normal{background:#fff;outline:1px solid #666;outline-offset:3px;box-shadow:0 0 0 3px #e6e6ea;color:#000}
.bad{background:#ffc7ce;color:#9c0006}.good{background:#c6efce;color:#006100}.neutral{background:#ffeb9c;color:#9c5700}
.calc{background:#f2f2f2;border:1px solid #7f7f7f;color:#fa7d00;font-weight:700}
.check{background:#a5a5a5;border:3px double #3f3f3f;color:#fff;font-weight:700;padding-left:3px}
.calc,.check{font-size:14px}
.expl{color:#7f7f7f;font-style:italic}.link{color:#954f72;text-decoration:underline}
.gscroll{display:flex;flex-direction:column;width:18px}
.gscroll button{flex:1;display:flex;align-items:center;justify-content:center;border:1px solid #666}
.gscroll .dim{border-color:#d0d0d0;color:#999}
.g-cells .gbody{padding-left:8px}
.g-edit .rows3{width:131px;padding-left:15px}
.g-edit .big{width:57px}
.g-add .gbody{justify-content:center}
.collapse{margin:0 15px 6px auto;align-self:flex-end}

.formula{display:flex;flex:none;padding:10px 10px 8px;font-size:15px;height:48px}
.fbox{display:flex;align-items:center;background:#fff;border:1px solid #d0d0d0;border-radius:5px;height:30px}
.namebox{width:128px;padding:0 6px}
.namebox input,.finput input{flex:1}
.grip{display:flex;flex-direction:column;justify-content:center;align-items:center;gap:2px;width:24px}
.grip i{width:3px;height:3px;background:#444;border-radius:1px}
.fx{width:107px;justify-content:space-between;padding:0 3px 0 7px;margin-right:5px}
.fn{font:italic 24px/24px "Liberation Serif",serif;color:#333}
.finput{flex:1;padding:0 4px 0 12px;font-size:16px}

.sheet{display:flex;flex:1;min-height:0}
.panes{flex:1;min-width:0;display:flex;flex-direction:column;background:#fff}
.grid{width:100%;table-layout:fixed;border-collapse:separate;border-spacing:0;font:15px/22px Lato,sans-serif;font-variant-ligatures:none;color:#000;flex:none}
.grid td,.grid th{height:22px;padding:0;white-space:nowrap;overflow:hidden;font-weight:400}
.grid thead th{height:23px;background:linear-gradient(#efefef,#c4c4c4) right/1px 100% no-repeat #efefef;border-bottom:1px solid #a6a6a6;font:16px/22px "Open Sans",sans-serif;color:#444}
.grid thead .lv{background:#efefef;border-color:#efefef}
.levels{display:flex;padding-left:2px}
.levels button{width:21px;height:21px;border:1px solid #777f88;background:#e4e4e4;font-size:11px;line-height:18px;color:#444}
.grid thead .corner{background:#efefef}
.corner svg{margin-left:15px}
.grid .rh{background:linear-gradient(90deg,#efefef,#c4c4c4) bottom/100% 1px no-repeat #efefef;border-right:1px solid #a6a6a6;font:15px/21px "Open Sans",sans-serif;color:#444;text-align:center}
.grid .c,.grid thead .c{border-right:1px solid #9b9b9b}
.grid .n{text-align:right;padding-right:10px}
.grid .k{text-align:right;padding-right:3px}
.grid .k,.grid .small{font-size:14px;line-height:20px;padding-top:2px}
.grid .b,.grid .c{padding-left:8px;font-size:16px}
.grid thead .c{padding:0}
.grid .c.small{padding-left:2px;font-size:14px}
.grid .title{padding-left:4px;font-weight:700;font-size:17px}
.frozen{border-bottom:1px solid #8f8f8f}
.scroll{flex:1;min-height:0;overflow:hidden}
.scroll .ol{background:linear-gradient(#8f8f8f,#8f8f8f) 9px 0/2px 100% no-repeat,linear-gradient(#999,#999) 30px 10px/2px 2px no-repeat}
.head{font-weight:700;text-decoration:underline}
.w-ol{width:47px}.w-rh{width:34px}.w-a{width:19px}.w-b{width:37px}.w-c{width:303px}.w-n{width:128px}
.vbar{width:26px;flex:none;background:#f3f3f3;border-left:1px solid #dcdcdc;display:flex;flex-direction:column;align-items:center;padding:5px 0 2px}
.thumb{width:10px;height:130px;border-radius:5px;background:#6b6b6b}
.above{flex:46}.below{flex:54}

.tabs{display:flex;flex:none;height:41px;border-top:1px solid #d4d4d4;border-bottom:1px solid #fff;font-size:16px}
.tabnav{display:flex;width:141px;padding:0 16px 8px 26px;justify-content:space-between;align-items:center}
.tabnav .ib,.tabend .ib{width:20px}
.tablist{flex:1;min-width:0;display:flex;gap:11px;overflow:hidden}
.tab{position:relative;flex:none;height:30px;margin-top:4px;border-radius:5px;padding:0 12px;white-space:nowrap;line-height:28px}
.tab::after{content:"";position:absolute;right:-6px;top:3px;width:1px;height:24px;background:#ccc}
.tab:last-child::after{display:none}
.y{background:#ffffcc;color:#000}.g{background:#808080;color:#fff}.p{background:#7030a0;color:#fff}
.plain,.p{padding:0 14px}.loan{padding:0 11px}.g{padding:0 13px}
.active{margin-top:-1px;height:36px;padding:0 10px;border:1px solid #fff;border-top:0;border-radius:0 0 6px 6px;background:linear-gradient(#fff 20%,#c3a9d8);font-weight:600;box-shadow:0 0 1px #777}
.active span{display:block;border-bottom:2px solid #107c41;padding-bottom:1px;line-height:26px}
.tabend{display:flex;align-items:center;width:119px;padding:0 0 8px 9px;gap:20px}
.tabend .grip{width:20px;height:20px}
.hbar{display:flex;align-items:center;width:152px;height:22px;margin:8px 24px 0 0;border-radius:8px;background:#f6f6f6;padding:0 5px;gap:4px}
.hbar i{width:22px;height:12px;border-radius:6px;background:#6b6b6b}
.last{margin-left:auto}

.status{display:flex;align-items:center;flex:none;height:26px;background:#f4f4f4;padding:0 16px 0 14px;gap:22px;font-size:13px}
.acc{display:flex;align-items:center;font-weight:600}
.views{display:flex;margin-left:auto;height:26px}
.view{width:50px;display:flex;align-items:center;justify-content:center}
.view.on{background:#dedede}
.zoom{display:flex;align-items:center;gap:5px;width:201px;margin-left:-17px}
.zoom input{appearance:none;width:125px;height:16px;background:linear-gradient(#555,#555) center/100% 1px no-repeat,linear-gradient(#555,#555) 50% 50%/1px 8px no-repeat}
.zoom input::-webkit-slider-thumb{appearance:none;width:6px;height:14px;background:#555}
.pct{margin-left:12px;font-size:12px}

.taskbar{display:flex;flex:none;height:50px;background:#d1dfea;color:#111}
.start{width:60px;display:flex;align-items:center;justify-content:center}
.tsearch{display:flex;align-items:center;width:360px;background:#fff;border:1px solid #bbb;padding:0 14px;gap:16px}
.tsearch input{flex:1;font-size:17px;color:#333}
.corn{width:72px;height:46px}
.apps{display:flex;gap:11px;padding-left:5px}
.app{width:51px;display:flex;align-items:center;justify-content:center;border-top:3px solid transparent;border-bottom:3px solid transparent}
.run{border-bottom-color:#0078d7}
.tray{display:flex;align-items:center;margin-left:auto;font-size:15px}
.vix{display:flex;align-items:center;gap:10px;font-size:17px;margin-right:76px}
.neg{color:#c42b1c}
.tricons{display:flex;gap:10px}
.clock{display:flex;flex-direction:column;align-items:center;font-size:14px;line-height:23px;width:98px}
.notif{position:relative;width:32px;display:flex;justify-content:center}
.badge{position:absolute;left:15px;top:8px;width:20px;height:20px;border-radius:50%;background:#d8d8d8;border:1px solid #777;font-size:12px;line-height:18px;text-align:center}
.cop{display:flex;flex-direction:column;align-items:center;width:70px;border-right:1px solid #a9b5bf;margin-right:5px;align-self:stretch;justify-content:center}
.cop b{background:#ffc61a;font-size:8px;line-height:8px;border-radius:2px;padding:0 2px;margin-top:-7px;position:relative}
```
FILE: app.js
```
const LETTERS = 'DEFGHIJKLMNOPQRS'.split('');
const COLS = '<colgroup><col class="w-ol"><col class="w-rh"><col class="w-a"><col class="w-b"><col class="w-c">' +
  '<col class="w-n">'.repeat(LETTERS.length) + '<col></colgroup>';
const repeat = (v, n) => Array(n).fill(v);

// Column headings and the three frozen rows.
const heads = ['A', 'B'].map(l => `<th>${l}</th>`).join('') + '<th class="c">C</th>' +
  LETTERS.map(l => `<th>${l}</th>`).join('') + '<th></th>';
const years = ['Period 0', ...repeat(1, 12), ...repeat(2, 3)];
const months = ['Period 0', ...Array.from({length: 15}, (_, i) => i + 1)];
const keyRow = (num, label, vals) =>
  `<tr><td></td><th class="rh">${num}</th><td></td><td></td><td class="c small">${label}</td>` +
  vals.map(v => `<td class="k">${v}</td>`).join('') + '<td></td></tr>';

document.getElementById('frozen').innerHTML = COLS +
  `<thead><tr><th class="lv"><div class="levels"><button>1</button><button>2</button></div></th>
  <th class="corner"><svg class="i14" viewBox="0 0 14 14"><path d="M14 0v14H0z" fill="#dcdcdc"/></svg></th>${heads}</tr></thead>
  <tbody><tr><td></td><th class="rh">1</th><td class="c title" colspan="3">20-Year Monthly Pro-Forma</td>${'<td></td>'.repeat(17)}</tr>` +
  keyRow(2, 'Year #', years) + keyRow(3, 'Month #', months) + '</tbody>';

// Scrolled rows: [label, values for E..S].
const rows = [];
for (let i = 7; i <= 32; i++) {
  const first = i < 18 ? 1 : i < 30 ? 2 : 3;
  const second = i < 17 ? 1 : i < 29 ? 2 : 3;
  rows.push(['Item ' + i, ['-', '-', ...repeat('$' + first, 10), ...repeat('$' + second, 3)]]);
}
rows.push(['Payment Charges', [...repeat('-', 6), ...repeat('$7,927', 4), '$7,926.56', ...repeat('$7,927', 3), '$9,512']]);
for (let i = 1; i <= 4; i++) rows.push([`Other ${i}.R`, repeat('-', 15)]);
rows.push(['', null], ['Staffing', null]);
const pay = ['$15,625', '$13,542', '$15,625', '$14,583', '$14,583', '$33,854', '$10,417'];
for (let i = 1; i <= 12; i++) {
  const start = i <= 7 ? i - 1 : 15;
  rows.push(['Staff Type ' + i, [...repeat('-', start), ...repeat(pay[i - 1], 15 - start)]]);
}

document.getElementById('body').innerHTML = COLS + '<tbody>' + rows.map(([label, vals], i) =>
  `<tr><td class="ol"></td><th class="rh">${135 + i}</th><td></td><td class="b">${vals ? 'G&amp;A' : ''}</td>` +
  `<td class="c">${label === 'Staffing' ? '<span class="head">Staffing</span>' : label}</td><td></td>` +
  (vals || repeat('', 15)).map(v => `<td class="n">${v}</td>`).join('') + '<td></td></tr>').join('') + '</tbody>';
document.getElementById('scroll').scrollTop = 16;
```
